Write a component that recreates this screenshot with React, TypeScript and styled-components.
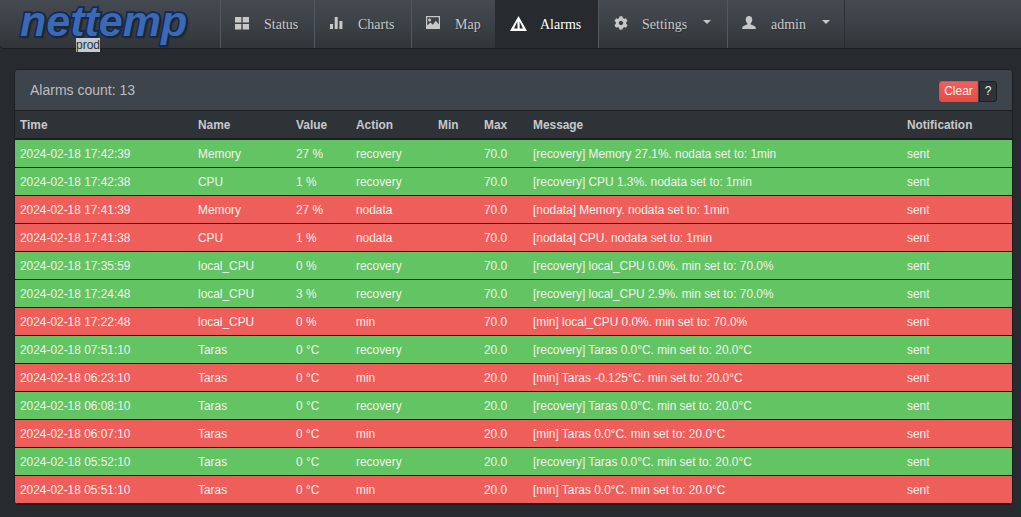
import React from 'react';
import styled, { createGlobalStyle } from 'styled-components';
import { FaCog } from 'react-icons/fa';

const GlobalStyle = createGlobalStyle`
  html, body {
    margin: 0;
    padding: 0;
    background: #272b30;
    font-family: "Liberation Sans", Arial, sans-serif;
    overflow: hidden;
  }
`;

const Page = styled.div`
  width: 1021px;
  height: 517px;
  overflow: hidden;
`;

const Navbar = styled.nav`
  display: flex;
  height: 48px;
  background: linear-gradient(#454a51, #3f444a 35%, #3a3f44 60%, #313539);
  border-bottom: 1px solid #1c1e22;
  border-radius: 0 0 0 4px;
`;

const Brand = styled.div`
  position: relative;
  width: 220px;
  flex: none;
`;

const Logo = styled.div`
  position: absolute;
  left: 20px;
  top: -3px;
  font: italic bold 43px "Liberation Sans", Arial, sans-serif;
  color: #3b69b4;
  -webkit-text-stroke: 3.5px #10295f;
  paint-order: stroke fill;
  text-shadow: 2px 2px 2px #22262a;
`;

const Env = styled.span`
  position: absolute;
  left: 76px;
  top: 38px;
  height: 14px;
  line-height: 15px;
  font-size: 12px;
  color: #2a2e33;
  background: #c3ccd3;
`;

const NavItem = styled.a<{ $active?: boolean; $width: number }>`
  display: flex;
  align-items: center;
  gap: 15px;
  width: ${p => p.$width}px;
  box-sizing: border-box;
  padding: 1px 0 0 14px;
  border-left: 1px solid ${p => (p.$active ? '#272b30' : '#55595e')};
  background: ${p => (p.$active ? '#272b30' : 'transparent')};
  color: ${p => (p.$active ? '#fff' : '#c8c8c8')};
  font: 14px "Liberation Serif", "Times New Roman", serif;
  text-shadow: 1px 1px 1px rgba(0, 0, 0, 0.3);
  &:last-child {
    border-right: 1px solid #2b2e33;
  }
`;

const NavIcon = styled.svg<{ $dim?: boolean }>`
  width: 14px;
  height: 14px;
  flex: none;
  margin-top: -3px;
  fill: currentColor;
  color: ${p => (p.$dim ? '#c8c8c8' : '#fff')};
`;

const WarnIcon = styled(NavIcon)`
  width: 17px;
  height: 15px;
  margin-right: -2px;
`;

const CogWrap = styled.span`
  display: flex;
  margin: -4px -1px 0 1px;
  font-size: 14px;
  color: #c8c8c8;
`;

const Caret = styled.span`
  width: 0;
  height: 0;
  margin-left: 1px;
  margin-top: -6px;
  border-left: 4px solid transparent;
  border-right: 4px solid transparent;
  border-top: 4px solid #c8c8c8;
`;

const Panel = styled.section`
  margin: 20px 8px 0 14px;
  border: 1px solid #1c1e22;
  border-radius: 4px;
  overflow: hidden;
  background: #2e3338;
`;

const PanelHead = styled.header`
  display: flex;
  align-items: center;
  justify-content: space-between;
  height: 40px;
  padding: 0 15px;
  background: #3e444c;
  border-bottom: 1px solid #1c1e22;
`;

const PanelTitle = styled.h3`
  margin: 0;
  font-size: 14px;
  font-weight: 400;
  color: #bdbdbd;
`;

const Buttons = styled.div`
  display: flex;
  gap: 1px;
  margin-top: 2px;
`;

const SmallButton = styled.button<{ $danger?: boolean }>`
  width: ${p => (p.$danger ? 39 : 18)}px;
  height: 21px;
  padding: 0;
  font: 12px "Liberation Sans", Arial, sans-serif;
  color: #f4f4f4;
  border: 1px solid ${p => (p.$danger ? '#d9534f' : '#1c1e22')};
  background: ${p => (p.$danger ? 'linear-gradient(#f0605d, #e84a46)' : '#2e3338')};
  border-radius: ${p => (p.$danger ? '3px 0 0 3px' : '0 3px 3px 0')};
`;

const Table = styled.table`
  width: 100%;
  table-layout: fixed;
  border-collapse: collapse;
  font-size: 11.9px;
`;

const Th = styled.th<{ $width: number }>`
  box-sizing: border-box;
  width: ${p => p.$width}px;
  height: 28px;
  padding: 0 5px;
  text-align: left;
  font-weight: 700;
  color: #c8c8c8;
  background: #2e3338;
  border-bottom: 2px solid #1c1e22;
`;

const Row = styled.tr<{ $ok: boolean }>`
  background: ${p => (p.$ok ? '#62c462' : '#ee5f5b')};
`;

const Td = styled.td`
  height: 26px;
  padding: 1px 5px 0;
  color: #f2f2f2;
  white-space: nowrap;
  border-bottom: 1px solid #1c1e22;
`;

const columns: [string, number][] = [
  ['Time', 178],
  ['Name', 98],
  ['Value', 60],
  ['Action', 82],
  ['Min', 46],
  ['Max', 49],
  ['Message', 374],
  ['Notification', 111],
];

const rows = [
  ['2024-02-18 17:42:39', 'Memory', '27 %', 'recovery', '70.0', '[recovery] Memory 27.1%. nodata set to: 1min'],
  ['2024-02-18 17:42:38', 'CPU', '1 %', 'recovery', '70.0', '[recovery] CPU 1.3%. nodata set to: 1min'],
  ['2024-02-18 17:41:39', 'Memory', '27 %', 'nodata', '70.0', '[nodata] Memory. nodata set to: 1min'],
  ['2024-02-18 17:41:38', 'CPU', '1 %', 'nodata', '70.0', '[nodata] CPU. nodata set to: 1min'],
  ['2024-02-18 17:35:59', 'local_CPU', '0 %', 'recovery', '70.0', '[recovery] local_CPU 0.0%. min set to: 70.0%'],
  ['2024-02-18 17:24:48', 'local_CPU', '3 %', 'recovery', '70.0', '[recovery] local_CPU 2.9%. min set to: 70.0%'],
  ['2024-02-18 17:22:48', 'local_CPU', '0 %', 'min', '70.0', '[min] local_CPU 0.0%. min set to: 70.0%'],
  ['2024-02-18 07:51:10', 'Taras', '0 °C', 'recovery', '20.0', '[recovery] Taras 0.0°C. min set to: 20.0°C'],
  ['2024-02-18 06:23:10', 'Taras', '0 °C', 'min', '20.0', '[min] Taras -0.125°C. min set to: 20.0°C'],
  ['2024-02-18 06:08:10', 'Taras', '0 °C', 'recovery', '20.0', '[recovery] Taras 0.0°C. min set to: 20.0°C'],
  ['2024-02-18 06:07:10', 'Taras', '0 °C', 'min', '20.0', '[min] Taras 0.0°C. min set to: 20.0°C'],
  ['2024-02-18 05:52:10', 'Taras', '0 °C', 'recovery', '20.0', '[recovery] Taras 0.0°C. min set to: 20.0°C'],
  ['2024-02-18 05:51:10', 'Taras', '0 °C', 'min', '20.0', '[min] Taras 0.0°C. min set to: 20.0°C'],
];

const App: React.FC = () => (
  <Page>
    <GlobalStyle />
    <Navbar>
      <Brand>
        <Logo>nettemp</Logo>
        <Env>prod</Env>
      </Brand>
      <NavItem $width={94}>
        <NavIcon $dim viewBox="0 0 14 14">
          <path d="M0 1h6.300v5.600H0zM7.700 1H14v5.600H7.700zM0 8h6.300v5.600H0zM7.700 8H14v5.600H7.700z" />
        </NavIcon>
        Status
      </NavItem>
      <NavItem $width={97}>
        <NavIcon $dim viewBox="0 0 14 14">
          <path d="M1 8h3v5H1zM5.700 1h3v12h-3zM10.400 5h3v8h-3z" />
        </NavIcon>
        Charts
      </NavItem>
      <NavItem $width={84}>
        <NavIcon $dim viewBox="0 0 14 14">
          <path fillRule="evenodd" d="M0 0h14v13H0zM1.200 1.200v8.400l3.200-3 2.400 2.200 3-4 3 3.600V1.200zM3.600 2.400a1.500 1.500 0 1 1 0 3 1.500 1.500 0 0 1 0-3z" />
        </NavIcon>
        Map
      </NavItem>
      <NavItem $active $width={103}>
        <WarnIcon viewBox="0 0 17 15">
          <path fillRule="evenodd" d="M8.500 0l8.500 15H0zM7.400 5.500L4 12.600h3.500zM9.600 5.500l.1 7.100H13z" />
        </WarnIcon>
        Alarms
      </NavItem>
      <NavItem $width={129}>
        <CogWrap>
          <FaCog />
        </CogWrap>
        Settings
        <Caret />
      </NavItem>
      <NavItem $width={118}>
        <NavIcon $dim viewBox="0 0 14 14">
          <path d="M7 0c2 0 3.300 1.500 3.300 3.600 0 1.600-.7 3-1.600 3.700v1.200c1.600.7 4.300 1.200 4.800 2.500.2.600.3 1.400.3 2H.2c0-.6.100-1.400.3-2 .5-1.300 3.200-1.800 4.800-2.500V7.300c-.9-.7-1.600-2.100-1.600-3.700C3.700 1.500 5 0 7 0z" />
        </NavIcon>
        admin
        <Caret />
      </NavItem>
    </Navbar>
    <Panel>
      <PanelHead>
        <PanelTitle>Alarms count: 13</PanelTitle>
        <Buttons>
          <SmallButton $danger>Clear</SmallButton>
          <SmallButton>?</SmallButton>
        </Buttons>
      </PanelHead>
      <Table>
        <thead>
          <tr>
            {columns.map(([label, width]) => (
              <Th key={label} $width={width}>{label}</Th>
            ))}
          </tr>
        </thead>
        <tbody>
          {rows.map(([time, name, value, action, max, message]) => (
            <Row key={time} $ok={action === 'recovery'}>
              <Td>{time}</Td>
              <Td>{name}</Td>
              <Td>{value}</Td>
              <Td>{action}</Td>
              <Td></Td>
              <Td>{max}</Td>
              <Td>{message}</Td>
              <Td>sent</Td>
            </Row>
          ))}
        </tbody>
      </Table>
    </Panel>
  </Page>
);

export default App;
